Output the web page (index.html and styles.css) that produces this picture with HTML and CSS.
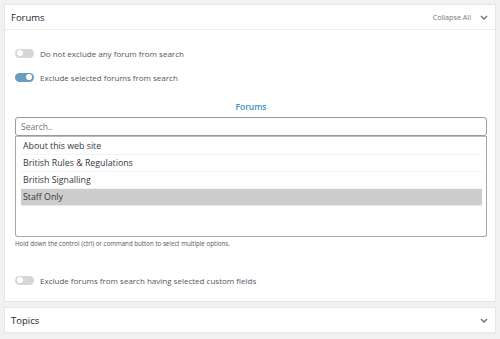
FILE: index.html
```html
<!DOCTYPE html>
<html>
<head>
<meta charset="utf-8">
<link rel="stylesheet" href="styles.css">
</head>
<body>
<div class="panel">
  <div class="panel-head">
    <span class="title">Forums</span>
    <span class="head-right">Collapse All
      <svg class="chev" width="8" height="5" viewBox="0 0 8 5"><path d="M1 1 L4 4 L7 1" fill="none" stroke="#777" stroke-width="1.5"/></svg>
    </span>
  </div>
  <div class="panel-body">
    <div class="opt"><span class="toggle"></span><span>Do not exclude any forum from search</span></div>
    <div class="opt"><span class="toggle on"></span><span>Exclude selected forums from search</span></div>
    <div class="sel-title">Forums</div>
    <div class="search">Search..</div>
    <div class="list">
      <div class="item">About this web site</div>
      <div class="item">British Rules &amp; Regulations</div>
      <div class="item">British Signalling</div>
      <div class="item selected">Staff Only</div>
    </div>
    <div class="help">Hold down the control (ctrl) or command button to select multiple options.</div>
    <div class="opt last"><span class="toggle"></span><span>Exclude forums from search having selected custom fields</span></div>
  </div>
</div>
<div class="panel">
  <div class="panel-head">
    <span class="title">Topics</span>
    <svg class="chev" width="8" height="5" viewBox="0 0 8 5"><path d="M1 1 L4 4 L7 1" fill="none" stroke="#777" stroke-width="1.5"/></svg>
  </div>
</div>
</body>
</html>
```
FILE: styles.css
```css
html, body { margin: 0; padding: 0; }
body {
  background: #f1f1f1;
  font-family: "Open Sans", "Liberation Sans", sans-serif;
  color: #3c434a;
  padding: 4px 4px 0 4px;
  width: 492px;
}
.panel {
  background: #fff;
  border: 1px solid #e6e6e6;
  margin-bottom: 5px;
}
.panel-head {
  height: 24px;
  border-bottom: 1px solid #ececec;
  display: flex;
  align-items: center;
  justify-content: space-between;
  padding: 0 7px 0 6px;
}
.title { font-size: 9.5px; color: #23282d; }
.head-right { display: flex; align-items: center; gap: 9px; font-size: 7.2px; color: #777; }
.chev { display: block; }
.panel-body { padding: 16px 8px 14px 10px; }
.opt {
  display: flex;
  align-items: center;
  gap: 6px;
  font-size: 8px;
  color: #50575e;
  height: 14px;
  margin-bottom: 10px;
}
.opt.last { margin-top: 25px; margin-bottom: 0; }
.toggle {
  width: 19px;
  height: 9px;
  border-radius: 5px;
  background: #d6d6d6;
  position: relative;
  flex: none;
}
.toggle::after {
  content: "";
  position: absolute;
  top: 1.5px; left: 2px;
  width: 6px; height: 6px;
  border-radius: 50%;
  background: #fff;
}
.toggle.on { background: #6c9cbb; }
.toggle.on::after { left: 11px; }
.sel-title {
  text-align: center;
  color: #3d8fc4;
  font-size: 8.5px;
  font-weight: 600;
  margin-top: 17px;
  margin-bottom: 5px;
}
.search {
  height: 17px;
  border: 1px solid #9b9b9b;
  border-radius: 3px;
  font-size: 8.5px;
  color: #6c7781;
  padding-left: 5px;
  line-height: 17px;
}
.list {
  height: 98px;
  border: 1px solid #a7a7a7;
  border-top-color: #bbb;
  border-radius: 0 0 3px 3px;
  padding: 1px 4px 0 5px;
}
.item {
  height: 16px;
  line-height: 16px;
  font-size: 8.8px;
  color: #32373c;
  border-bottom: 1px solid #f3f3f3;
  padding-left: 2px;
}
.item.selected { background: #cdcdcd; border-bottom-color: #e8e8e8; }
.help {
  font-size: 6.2px;
  color: #555;
  margin-top: 2px;
}
```
